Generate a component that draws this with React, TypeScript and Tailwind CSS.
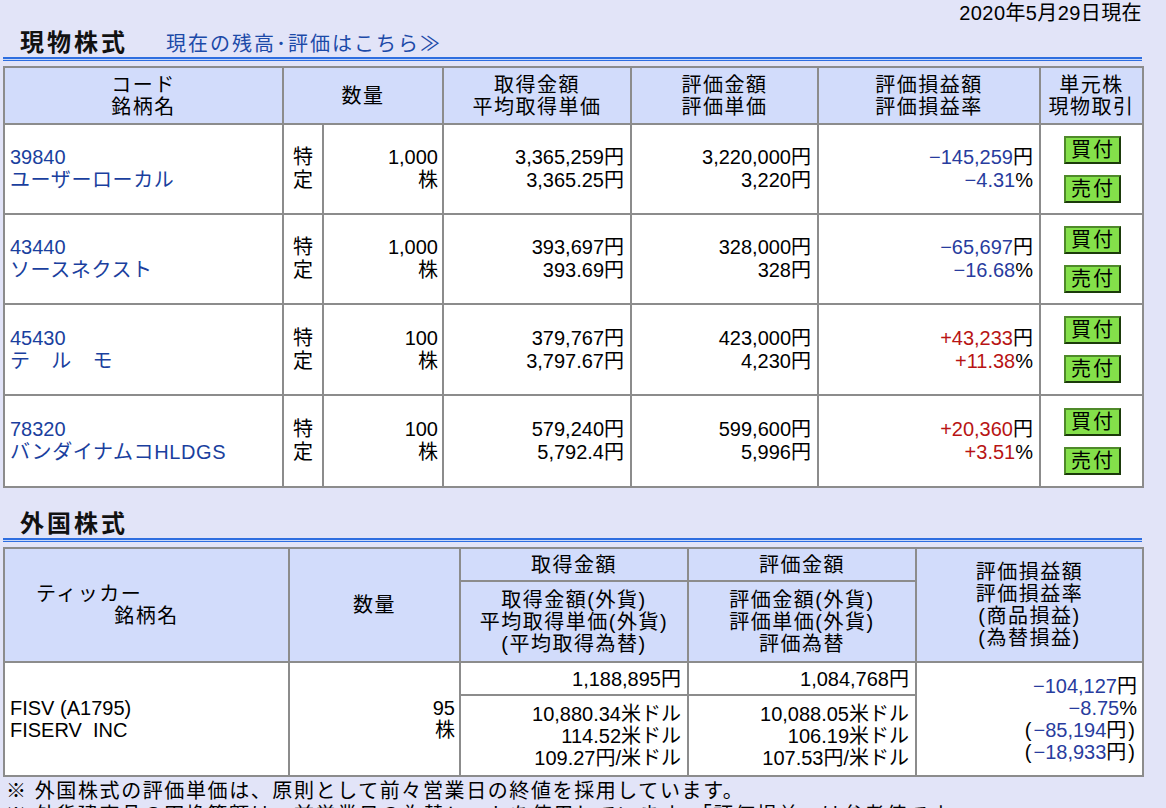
import React from "react";

const border = "border-2 border-[#8c8c8c]";
const th = `${border} bg-[#d2dcfb] font-normal text-center align-middle p-0`;
const td = `${border} bg-white align-middle p-0`;

const BLUE = "text-[#283c9e]";
const RED = "text-[#b81414]";

function Val({ n, u, pos }: { n: string; u: string; pos: boolean }) {
  return (
    <div>
      <span className={pos ? RED : BLUE}>{n}</span>
      <span>{u}</span>
    </div>
  );
}

function Btn({ label }: { label: string }) {
  return (
    <div className="w-[57px] h-[28px] border-2 border-t-[#4f8a2a] border-l-[#4f8a2a] border-r-[#1b3a0a] border-b-[#1b3a0a] bg-[#84e04a] flex items-center justify-center text-[20px] leading-none tracking-[2px] pl-[2px] text-black">
      {label}
    </div>
  );
}

type Row = {
  code: string;
  name: string;
  qty: string;
  cost: string;
  avg: string;
  val: string;
  unit: string;
  pl: string;
  pct: string;
  pos: boolean;
  h: string;
};

const rows: Row[] = [
  { code: "39840", name: "ユーザーローカル", qty: "1,000", cost: "3,365,259円", avg: "3,365.25円", val: "3,220,000円", unit: "3,220円", pl: "−145,259", pct: "−4.31", pos: false, h: "h-[90px]" },
  { code: "43440", name: "ソースネクスト", qty: "1,000", cost: "393,697円", avg: "393.69円", val: "328,000円", unit: "328円", pl: "−65,697", pct: "−16.68", pos: false, h: "h-[90px]" },
  { code: "45430", name: "テ　ル　モ", qty: "100", cost: "379,767円", avg: "3,797.67円", val: "423,000円", unit: "4,230円", pl: "+43,233", pct: "+11.38", pos: true, h: "h-[91px]" },
  { code: "78320", name: "バンダイナムコHLDGS", qty: "100", cost: "579,240円", avg: "5,792.4円", val: "599,600円", unit: "5,996円", pl: "+20,360", pct: "+3.51", pos: true, h: "h-[92px]" },
];

function SectionTitle({ title, link }: { title: string; link?: string }) {
  return (
    <div>
      <div className="h-[31px] flex items-end pl-[17px]">
        <span className="text-[24px] leading-[28px] font-bold tracking-[3px] text-[#111]">{title}</span>
        {link && (
          <span className="ml-[38px] text-[20px] leading-[26px] tracking-[2px] text-[#1c4aa8]">{link}</span>
        )}
      </div>
      <div className="h-[4px] border-t-2 border-b border-[#2e6ee0] bg-[#c9d8f7]" />
    </div>
  );
}

function Paren({ children }: { children: React.ReactNode }) {
  return (
    <div>
      <span className="pr-[2px]">(</span>
      <span className={BLUE}>{children}</span>円<span className="pl-[2px] pr-[2px]">)</span>
    </div>
  );
}

export default function App() {
  return (
    <div className="min-h-[808px] bg-[#e2e4f8] text-black font-['Liberation_Sans','Noto_Sans_CJK_JP',sans-serif] text-[20px] leading-[22px] overflow-hidden">
      <div className="ml-[3px] w-[1139px]">
        <div className="h-[26px] flex items-center justify-end text-[20px] tracking-[0.4px]">2020年5月29日現在</div>
        <SectionTitle title="現物株式" link="現在の残高･評価はこちら≫" />
        <table className="mt-[5px] border-collapse table-fixed w-[1139px] text-[20px] leading-[23px]">
          <colgroup>
            <col className="w-[279px]" />
            <col className="w-[40px]" />
            <col className="w-[120px]" />
            <col className="w-[188px]" />
            <col className="w-[187px]" />
            <col className="w-[222px]" />
            <col className="w-[103px]" />
          </colgroup>
          <thead>
            <tr className="h-[57px] leading-[22px] tracking-[1.5px]">
              <th className={th}>コード<br />銘柄名</th>
              <th className={th} colSpan={2}>数量</th>
              <th className={th}>取得金額<br />平均取得単価</th>
              <th className={th}>評価金額<br />評価単価</th>
              <th className={th}>評価損益額<br />評価損益率</th>
              <th className={th}>単元株<br />現物取引</th>
            </tr>
          </thead>
          <tbody>
            {rows.map((r) => (
              <tr key={r.code} className={r.h}>
                <td className={`${td} pl-[5px] text-[#1a3f9e]`}>
                  <div>{r.code}</div>
                  <div className="tracking-[0.6px]">{r.name}</div>
                </td>
                <td className={`${td} text-center`}>特<br />定</td>
                <td className={`${td} text-right pr-[4px]`}>{r.qty}<br />株</td>
                <td className={`${td} text-right pr-[6px]`}>{r.cost}<br />{r.avg}</td>
                <td className={`${td} text-right pr-[6px]`}>{r.val}<br />{r.unit}</td>
                <td className={`${td} text-right pr-[6px]`}>
                  <Val n={r.pl} u="円" pos={r.pos} />
                  <Val n={r.pct} u="%" pos={r.pos} />
                </td>
                <td className={td}>
                  <div className="flex flex-col items-center gap-[11px] pl-[1px]">
                    <Btn label="買付" />
                    <Btn label="売付" />
                  </div>
                </td>
              </tr>
            ))}
          </tbody>
        </table>

        <div className="mt-[19px]">
          <SectionTitle title="外国株式" />
        </div>

        <table className="mt-[5px] border-collapse table-fixed w-[1139px] text-[20px] leading-[22px]">
          <colgroup>
            <col className="w-[285px]" />
            <col className="w-[171px]" />
            <col className="w-[228px]" />
            <col className="w-[228px]" />
            <col className="w-[227px]" />
          </colgroup>
          <thead className="tracking-[1.5px]">
            <tr className="h-[33px]">
              <th className={th} rowSpan={2}>
                <div className="text-left pl-[31px]">ティッカー</div>
                <div>銘柄名</div>
              </th>
              <th className={th} rowSpan={2}>数量</th>
              <th className={th}>取得金額</th>
              <th className={th}>評価金額</th>
              <th className={th} rowSpan={2}>
                評価損益額<br />評価損益率<br />(商品損益)<br />(為替損益)
              </th>
            </tr>
            <tr className="h-[81px]">
              <th className={th}>取得金額(外貨)<br />平均取得単価(外貨)<br />(平均取得為替)</th>
              <th className={th}>評価金額(外貨)<br />評価単価(外貨)<br />評価為替</th>
            </tr>
          </thead>
          <tbody>
            <tr className="h-[33px]">
              <td className={`${td} pl-[5px]`} rowSpan={2}>
                <div>FISV (A1795)</div>
                <div>FISERV&nbsp;&nbsp;INC</div>
              </td>
              <td className={`${td} text-right pr-[4px]`} rowSpan={2}>95<br />株</td>
              <td className={`${td} text-right pr-[6px]`}>1,188,895円</td>
              <td className={`${td} text-right pr-[6px]`}>1,084,768円</td>
              <td className={`${td} text-right pr-[5px]`} rowSpan={2}>
                <Val n="−104,127" u="円" pos={false} />
                <Val n="−8.75" u="%" pos={false} />
                <Paren>−85,194</Paren>
                <Paren>−18,933</Paren>
              </td>
            </tr>
            <tr className="h-[81px]">
              <td className={`${td} text-right pr-[6px]`}>10,880.34米ドル<br />114.52米ドル<br />109.27円/米ドル</td>
              <td className={`${td} text-right pr-[6px]`}>10,088.05米ドル<br />106.19米ドル<br />107.53円/米ドル</td>
            </tr>
          </tbody>
        </table>
        <div className="mt-[2px] pl-[3px] text-[20px] leading-[24px] tracking-[1.6px]">
          ※ 外国株式の評価単価は、原則として前々営業日の終値を採用しています。
        </div>
        <div className="pl-[3px] text-[20px] leading-[24px] tracking-[1.6px]">
          ※ 外貨建商品の円換算額は、前営業日の為替レートを使用しています。「評価損益」は参考値です。
        </div>
      </div>
    </div>
  );
}
